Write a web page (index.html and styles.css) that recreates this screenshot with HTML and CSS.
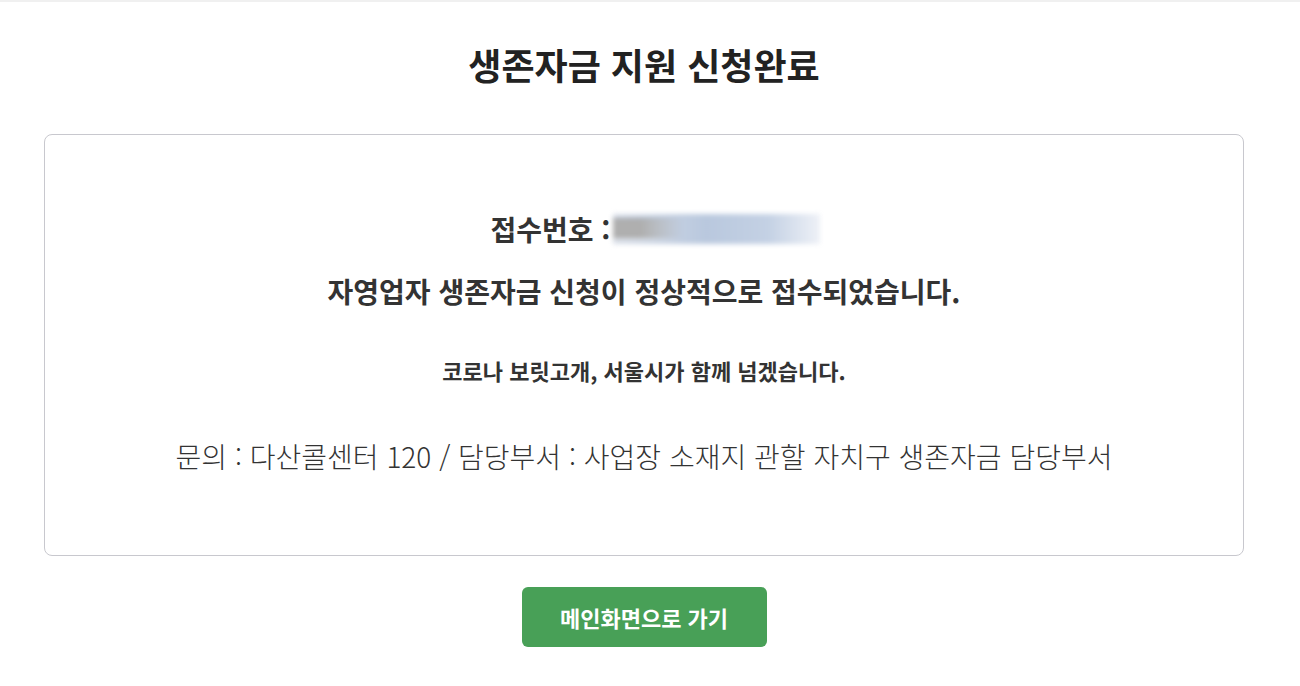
FILE: index.html
```html
<!DOCTYPE html>
<html lang="ko">
<head>
  <meta charset="UTF-8">
  <meta name="viewport" content="width=device-width, initial-scale=1.0">
  <title>생존자금 지원 신청완료</title>
  <link rel="stylesheet" href="styles.css">
</head>
<body>
  <div class="top-line"></div>
  <div class="wrap">
    <h1 class="page-title">생존자금 지원 신청완료</h1>

    <div class="result-box">
      <p class="receipt">
        <span>접수번호 :</span>
        <span class="receipt-no" aria-label="접수번호 가림"></span>
      </p>
      <p class="result-msg">자영업자 생존자금 신청이 정상적으로 접수되었습니다.</p>
      <p class="slogan">코로나 보릿고개, 서울시가 함께 넘겠습니다.</p>
      <p class="contact">문의 : 다산콜센터 120 / 담당부서 : 사업장 소재지 관할 자치구 생존자금 담당부서</p>
    </div>

    <div class="btn-area">
      <a href="#" class="btn-main">메인화면으로 가기</a>
    </div>
  </div>
</body>
</html>
```

FILE: styles.css
```css
body {
  margin: 0;
  font-family: "Noto Sans CJK KR", "Noto Sans", sans-serif;
  color: #222;
  background-color: #fff;
}

p {
  margin: 0;
}

.top-line {
  height: 2px;
  background-color: #f0f0f0;
}

.wrap {
  width: 1200px;
  margin: 0 0 0 44px;
}

.page-title {
  margin: 36px 0 0;
  font-size: 36px;
  font-weight: 700;
  line-height: 52px;
  text-align: center;
  color: #222;
}

.result-box {
  margin-top: 44px;
  height: 422px;
  box-sizing: border-box;
  border: 1px solid #c8c8ce;
  border-radius: 8px;
  padding-top: 72px;
  text-align: center;
}

/* blurred receipt image sits a little right of centre */
.receipt {
  display: flex;
  justify-content: center;
  align-items: center;
  gap: 2px;
  padding-left: 22px;
  font-size: 28px;
  font-weight: 700;
  line-height: 44px;
  color: #333;
}

.receipt-no {
  width: 207px;
  height: 30px;
  background: linear-gradient(90deg, #d8dee8 0%, #b9c8de 45%, #c4d1e4 75%, #eef1f7 100%);
  filter: blur(2.5px);
  position: relative;
}

.receipt-no::before {
  content: "";
  position: absolute;
  left: 0;
  top: 5px;
  width: 70px;
  height: 20px;
  background: repeating-linear-gradient(180deg, #7e7e7e 0, #7e7e7e 2px, #cfcfcf 2px, #cfcfcf 5px);
  -webkit-mask-image: linear-gradient(90deg, #000 40%, transparent 100%);
  mask-image: linear-gradient(90deg, #000 40%, transparent 100%);
}

.result-msg {
  margin-top: 20px;
  font-size: 28px;
  font-weight: 700;
  line-height: 40px;
  color: #333;
}

.slogan {
  margin-top: 44px;
  font-size: 22px;
  font-weight: 700;
  line-height: 30px;
  color: #333;
}

.contact {
  margin-top: 51px;
  font-size: 28px;
  font-weight: 300;
  line-height: 40px;
  color: #333;
}

.btn-area {
  display: flex;
  justify-content: center;
  margin-top: 31px;
}

.btn-main {
  display: block;
  width: 245px;
  height: 60px;
  line-height: 60px;
  border-radius: 6px;
  background-color: #48a057;
  color: #fff;
  font-size: 22px;
  font-weight: 700;
  text-align: center;
  text-decoration: none;
}
```
